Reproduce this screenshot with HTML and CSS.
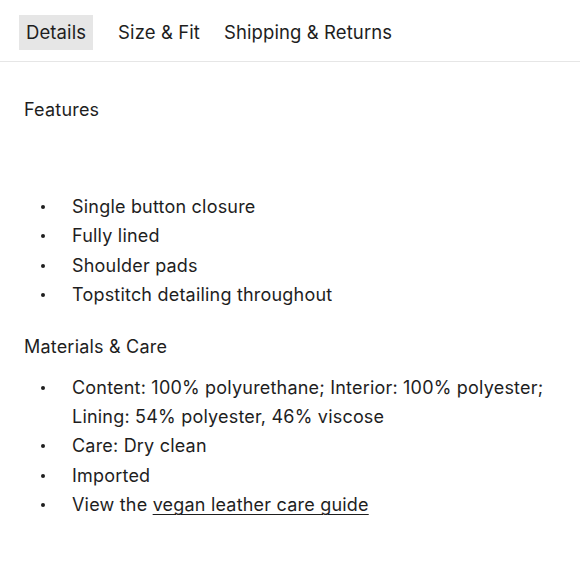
FILE: index.html
```html
<!DOCTYPE html>
<html>
<head>
<meta charset="utf-8">
<link rel="stylesheet" href="styles.css">
</head>
<body>
<div class="tabs">
  <span class="tab active">Details</span>
  <span class="tab">Size &amp; Fit</span>
  <span class="tab">Shipping &amp; Returns</span>
</div>
<div class="content">
  <h3 class="heading">Features</h3>
  <div class="spacer"></div>
  <ul class="list">
    <li>Single button closure</li>
    <li>Fully lined</li>
    <li>Shoulder pads</li>
    <li>Topstitch detailing throughout</li>
  </ul>
  <h3 class="heading heading2">Materials &amp; Care</h3>
  <ul class="list">
    <li>Content: 100% polyurethane; Interior: 100% polyester; Lining: 54% polyester, 46% viscose</li>
    <li>Care: Dry clean</li>
    <li>Imported</li>
    <li>View the <a class="link" href="#">vegan leather care guide</a></li>
  </ul>
</div>
</body>
</html>
```
FILE: styles.css
```css
html, body {
  margin: 0;
  padding: 0;
  background: #fff;
}
body {
  font-family: Inter, "Noto Sans", sans-serif;
  color: #1e1e1e;
  font-size: 18px;
  letter-spacing: 0.2px;
  width: 580px;
}
.tabs {
  display: flex;
  padding: 15px 0 0 19px;
  height: 62px;
  box-sizing: border-box;
  border-bottom: 1px solid #e6e6e6;
}
.tab {
  height: 35px;
  line-height: 35px;
  padding: 0 7px;
  margin-right: 10px;
  font-size: 18.5px;
  letter-spacing: 0.1px;
}
.tab.active {
  background: #e6e6e6;
  margin-right: 18px;
}
.content {
  padding: 0 0 0 24px;
}
.heading {
  margin: 0;
  padding-top: 36px;
  font-weight: 400;
  font-size: 18px;
  line-height: 24px;
}
.spacer {
  height: 70px;
}
.list {
  margin: 0;
  padding: 0 0 0 48px;
  line-height: 29.4px;
  width: 480px;
  list-style: none;
}
.list li {
  position: relative;
}
.list li::before {
  content: "";
  position: absolute;
  left: -31px;
  top: 13px;
  width: 4px;
  height: 4px;
  border-radius: 50%;
  background: #1e1e1e;
}
.heading2 {
  padding-top: 25px;
  padding-bottom: 14px;
}
.link {
  color: inherit;
  text-decoration: underline;
  text-underline-offset: 3px;
  text-decoration-thickness: 1px;
}
```
